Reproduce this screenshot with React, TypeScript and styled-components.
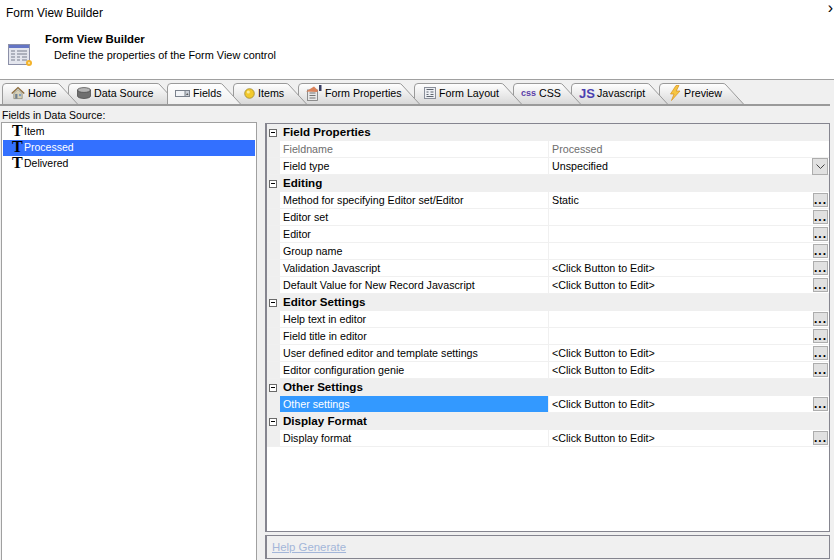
import React from 'react';
import styled, { createGlobalStyle } from 'styled-components';

const GlobalStyle = createGlobalStyle`
  html, body {
    margin: 0;
    padding: 0;
    background: #f0f0f0;
  }
  body {
    font-family: "Liberation Sans", Arial, sans-serif;
    font-size: 11px;
    color: #000;
    overflow: hidden;
  }
`;

const tabs = [
  { label: 'Home', width: 76, gap: 0, inset: 9, icon: 'home' },
  { label: 'Data Source', width: 110, gap: -10, inset: 9, icon: 'db' },
  { label: 'Fields', width: 74, gap: -11, inset: 8, icon: 'field', active: true },
  { label: 'Items', width: 74, gap: -8, inset: 11, icon: 'item' },
  { label: 'Form Properties', width: 122, gap: -9, inset: 8, icon: 'props' },
  { label: 'Form Layout', width: 108, gap: -6, inset: 10, icon: 'layout' },
  { label: 'CSS', width: 68, gap: -9, inset: 8, icon: 'css' },
  { label: 'Javascript', width: 97, gap: -10, inset: 8, icon: 'js' },
  { label: 'Preview', width: 85, gap: -9, inset: 10, icon: 'bolt' },
];

const sections = [
  {
    title: 'Field Properties',
    rows: [
      { name: 'Fieldname', value: 'Processed', muted: true },
      { name: 'Field type', value: 'Unspecified', button: 'combo' },
    ],
  },
  {
    title: 'Editing',
    rows: [
      { name: 'Method for specifying Editor set/Editor', value: 'Static', button: 'dots' },
      { name: 'Editor set', value: '', button: 'dots' },
      { name: 'Editor', value: '', button: 'dots' },
      { name: 'Group name', value: '', button: 'dots' },
      { name: 'Validation Javascript', value: '<Click Button to Edit>', button: 'dots' },
      { name: 'Default Value for New Record Javascript', value: '<Click Button to Edit>', button: 'dots' },
    ],
  },
  {
    title: 'Editor Settings',
    rows: [
      { name: 'Help text in editor', value: '', button: 'dots' },
      { name: 'Field title in editor', value: '', button: 'dots' },
      { name: 'User defined editor and template settings', value: '<Click Button to Edit>', button: 'dots' },
      { name: 'Editor configuration genie', value: '<Click Button to Edit>', button: 'dots' },
    ],
  },
  {
    title: 'Other Settings',
    rows: [{ name: 'Other settings', value: '<Click Button to Edit>', button: 'dots', selected: true }],
  },
  {
    title: 'Display Format',
    rows: [{ name: 'Display format', value: '<Click Button to Edit>', button: 'dots' }],
  },
];

function TabIcon({ kind }: { kind: string }) {
  if (kind === 'home') {
    return (
      <svg width="14" height="14" viewBox="0 0 15 14">
        <path d="M.8 7.500 7.500 1.200l6.700 6.300" fill="none" stroke="#8a6a3a" strokeWidth="1.500" />
        <path d="M3 7.500 7.500 3.300 12 7.500V13H3z" fill="#d9d2b8" stroke="#7d7d6a" strokeWidth=".7" />
        <rect x="4.500" y="8" width="2.400" height="5" fill="#6f7f8f" />
        <rect x="8.500" y="8" width="2.400" height="2.400" fill="#7d9cc0" />
      </svg>
    );
  }
  if (kind === 'db') {
    return (
      <svg width="14" height="12" viewBox="0 0 14 12">
        <path d="M.5 3v6c0 1.400 2.900 2.500 6.500 2.500s6.500-1.100 6.500-2.500V3z" fill="#6f6f6f" stroke="#444" strokeWidth=".7" />
        <ellipse cx="7" cy="3" rx="6.500" ry="2.400" fill="#b5b5b5" stroke="#444" strokeWidth=".7" />
      </svg>
    );
  }
  if (kind === 'field') {
    return (
      <svg width="15" height="7" viewBox="0 0 15 7">
        <rect x=".5" y=".5" width="14" height="6" fill="#f2f4f7" stroke="#7a818c" />
        <rect x="10" y=".5" width="4.500" height="6" fill="#c9ced6" stroke="#7a818c" />
        <path d="M11 5h2.500l-1.200-2z" fill="#555" />
      </svg>
    );
  }
  if (kind === 'item') {
    return (
      <svg width="11" height="11" viewBox="0 0 11 11">
        <circle cx="5.500" cy="5.500" r="4.800" fill="#f2c92c" stroke="#a08a30" strokeWidth=".8" />
        <circle cx="4.300" cy="4" r="1.600" fill="#fbeb9a" />
      </svg>
    );
  }
  if (kind === 'props') {
    return (
      <svg width="16" height="16" viewBox="0 0 16 16">
        <rect x="1.500" y="5" width="10" height="10.500" fill="#e8e8e8" stroke="#777" strokeWidth=".8" />
        <path d="M3.500 8h6M3.500 10.500h6M3.500 13h6" stroke="#666" strokeWidth=".9" />
        <path d="M0 6.500 8 1.500l4 4-1 1.500z" fill="#d9825a" />
        <rect x="13" y="0" width="2.500" height="6" fill="#3a3f63" />
      </svg>
    );
  }
  if (kind === 'layout') {
    return (
      <svg width="12" height="12" viewBox="0 0 12 12">
        <rect x=".5" y=".5" width="11" height="11" fill="#eef0f4" stroke="#8a8f9a" />
        <path d="M2.500 2.500h7M2.500 5h2M6.500 5h3M2.500 7.500h2M6.500 7.500h3M2.500 9.500h7" stroke="#5f6670" />
      </svg>
    );
  }
  if (kind === 'css') {
    return <CssMark>css</CssMark>;
  }
  if (kind === 'js') {
    return <JsMark>JS</JsMark>;
  }
  return (
    <svg width="12" height="16" viewBox="0 0 12 16">
      <path d="M7 .5 1.500 9H5L2.500 15.500 11 6H7.200L10 .5z" fill="#f5c542" stroke="#d98f1a" strokeWidth=".7" />
    </svg>
  );
}

function TabShape({ width, active, index }: { width: number; active?: boolean; index: number }) {
  const id = `tab-fill-${index}`;
  return (
    <TabSvg width={width} height="21" viewBox={`0 0 ${width} 21`}>
      <defs>
        <linearGradient id={id} x1="0" y1="0" x2="0" y2="1">
          <stop offset="0" stopColor="#ffffff" />
          <stop offset="1" stopColor={active ? '#f0f0f0' : '#d9d9d9'} />
        </linearGradient>
      </defs>
      <path
        d={`M.5 21V4Q.5.5 4 .5H${width - 21}Q${width - 19} .5 ${width - 18} 2L${width - 0.5} 21`}
        fill={`url(#${id})`}
        stroke="#9a9a9a"
      />
    </TabSvg>
  );
}

export default function App() {
  return (
    <Page>
      <GlobalStyle />
      <Header>
        <TitleRow>
          <span>Form View Builder</span>
          <Chevron>›</Chevron>
        </TitleRow>
        <Intro>
          <svg width="26" height="24" viewBox="0 0 26 24">
            <rect x=".5" y=".5" width="21" height="20" fill="#e4e6ee" stroke="#8c90a8" />
            <rect x="1" y="1" width="20" height="3" fill="#6475c4" />
            <path d="M3 7h4M9 7h10M3 10h4M9 10h10M3 13h4M9 13h3M14 13h5M3 16h4M9 16h3M14 16h5" stroke="#777c8c" strokeWidth="1.200" />
            <circle cx="21" cy="19" r="3" fill="#f4b32c" />
            <circle cx="21" cy="19" r="1" fill="#fdeeb0" />
          </svg>
          <IntroText>
            <strong>Form View Builder</strong>
            <span>Define the properties of the Form View control</span>
          </IntroText>
        </Intro>
      </Header>

      <TabBar>
        {tabs.map((tab, index) => (
          <Tab key={tab.label} $width={tab.width} $gap={tab.gap} $layer={tab.active ? 20 : 10 - index}>
            <TabShape width={tab.width} active={tab.active} index={index} />
            <TabContent $inset={tab.inset}>
              <TabIcon kind={tab.icon} />
              <span>{tab.label}</span>
            </TabContent>
          </Tab>
        ))}
      </TabBar>

      <Body>
        <LeftColumn>
          <ListLabel>Fields in Data Source:</ListLabel>
          <FieldList>
            {['Item', 'Processed', 'Delivered'].map((name) => (
              <FieldItem key={name} $selected={name === 'Processed'}>
                <FieldGlyph>T</FieldGlyph>
                <span>{name}</span>
              </FieldItem>
            ))}
          </FieldList>
        </LeftColumn>

        <RightColumn>
          <PropertyGrid>
            {sections.map((section) => (
              <React.Fragment key={section.title}>
                <SectionRow>
                  <Gutter>
                    <Collapse />
                  </Gutter>
                  <SectionTitle>{section.title}</SectionTitle>
                </SectionRow>
                {section.rows.map((row) => (
                  <PropRow key={row.name}>
                    <Gutter />
                    <NameCell $selected={row.selected} $muted={row.muted}>
                      {row.name}
                    </NameCell>
                    <ValueCell $muted={row.muted}>
                      <span>{row.value}</span>
                      {row.button === 'dots' && <DotsButton>...</DotsButton>}
                      {row.button === 'combo' && (
                        <ComboButton>
                          <svg width="9" height="6" viewBox="0 0 9 6">
                            <path d="M.5.500 4.500 4.500 8.500.5" fill="none" stroke="#444" />
                          </svg>
                        </ComboButton>
                      )}
                    </ValueCell>
                  </PropRow>
                ))}
              </React.Fragment>
            ))}
          </PropertyGrid>
          <HelpPanel>
            <HelpLink>Help Generate</HelpLink>
          </HelpPanel>
        </RightColumn>
      </Body>
    </Page>
  );
}

const Page = styled.div`
  width: 834px;
  height: 560px;
  display: flex;
  flex-direction: column;
  overflow: hidden;
  background: #f0f0f0;
`;

const Header = styled.header`
  height: 79px;
  background: #fff;
  border-bottom: 1px solid #a0a0a0;
  display: flex;
  flex-direction: column;
`;

const TitleRow = styled.div`
  height: 26px;
  padding: 0 0 0 6px;
  display: flex;
  align-items: center;
  justify-content: space-between;
  font-size: 11.9px;
`;

const Chevron = styled.span`
  font-size: 16px;
  line-height: 16px;
  margin: -10px 1px 0 0;
`;

const Intro = styled.div`
  display: flex;
  padding: 7px 0 0 8px;
  gap: 11px;
  svg {
    margin-top: 11px;
  }
`;

const IntroText = styled.div`
  display: flex;
  flex-direction: column;
  gap: 3px;
  line-height: 13px;
  strong {
    font-size: 11.4px;
  }
  span {
    padding-left: 9px;
    font-size: 10.9px;
  }
`;

const TabBar = styled.nav`
  height: 23px;
  margin-top: 3px;
  width: 830px;
  padding-left: 2px;
  box-sizing: border-box;
  display: flex;
  align-items: flex-end;
  border-bottom: 2px solid #9a9a9a;
`;

const Tab = styled.div<{ $width: number; $gap: number; $layer: number }>`
  position: relative;
  width: ${(p) => p.$width}px;
  height: 21px;
  margin-left: ${(p) => p.$gap}px;
  z-index: ${(p) => p.$layer};
  flex: none;
`;

const TabSvg = styled.svg`
  position: absolute;
  left: 0;
  top: 0;
`;

const TabContent = styled.div<{ $inset: number }>`
  position: relative;
  height: 20px;
  padding-left: ${(p) => p.$inset}px;
  display: flex;
  align-items: center;
  gap: 3px;
  white-space: nowrap;
  font-size: 10.7px;
`;

const CssMark = styled.span`
  font-size: 9px;
  font-weight: 700;
  color: #5a3fa8;
  width: 15px;
`;

const JsMark = styled.span`
  font-size: 13px;
  font-weight: 700;
  color: #4a3fb0;
  width: 15px;
`;

const Body = styled.div`
  flex: 1;
  display: flex;
  min-height: 0;
`;

const LeftColumn = styled.div`
  width: 257px;
  display: flex;
  flex-direction: column;
  flex: none;
`;

const ListLabel = styled.div`
  height: 16px;
  padding: 2px 0 0 2px;
  box-sizing: border-box;
  line-height: 15px;
  font-size: 10.5px;
`;

const FieldList = styled.div`
  flex: 1;
  margin-left: 1px;
  padding: 1px;
  background: #fff;
  border: solid #a0a0a0;
  border-width: 1px 1px 0 1px;
  font-size: 10.5px;
`;

const FieldItem = styled.div<{ $selected?: boolean }>`
  height: 16px;
  box-sizing: border-box;
  padding: 0 0 2px 9px;
  display: flex;
  align-items: center;
  background: ${(p) => (p.$selected ? '#3370ff' : 'transparent')};
  color: ${(p) => (p.$selected ? '#fff' : '#000')};
`;

const FieldGlyph = styled.span`
  width: 12px;
  font-family: "Liberation Serif", serif;
  font-size: 16px;
  font-weight: 700;
  line-height: 16px;
  color: #000;
`;

const RightColumn = styled.div`
  flex: 1;
  padding: 17px 4px 1px 8px;
  display: flex;
  flex-direction: column;
  gap: 3px;
  min-width: 0;
`;

const PropertyGrid = styled.div`
  flex: 1;
  background: #fff;
  border: 1px solid #85858f;
  border-left-width: 2px;
  font-size: 10.7px;
`;

const SectionRow = styled.div`
  height: 17px;
  display: flex;
  align-items: center;
  background: #efefef;
`;

const Gutter = styled.div`
  width: 13px;
  height: 100%;
  flex: none;
  display: flex;
  align-items: center;
  justify-content: flex-end;
  background: #efefef;
`;

const Collapse = styled.span`
  width: 6px;
  height: 6px;
  margin-right: 3px;
  border: 1px solid #6a6a6a;
  background: linear-gradient(#000, #000) center / 4px 1px no-repeat, #fff;
`;

const SectionTitle = styled.div`
  padding: 0 0 2px 3px;
  font-weight: 700;
  font-size: 11.6px;
`;

const PropRow = styled.div`
  height: 17px;
  display: flex;
  border-bottom: 1px solid #f0f0f0;
  box-sizing: border-box;
`;

const NameCell = styled.div<{ $selected?: boolean; $muted?: boolean }>`
  width: 269px;
  flex: none;
  padding-left: 3px;
  box-sizing: border-box;
  line-height: 16px;
  border-right: 1px solid #f0f0f0;
  background: ${(p) => (p.$selected ? '#3399ff' : '#fff')};
  color: ${(p) => (p.$selected ? '#fff' : p.$muted ? '#6d6d6d' : '#000')};
`;

const ValueCell = styled.div<{ $muted?: boolean }>`
  flex: 1;
  position: relative;
  padding-left: 3px;
  line-height: 16px;
  color: ${(p) => (p.$muted ? '#6d6d6d' : '#000')};
`;

const DotsButton = styled.div`
  position: absolute;
  right: 1px;
  top: 1px;
  width: 15px;
  height: 14px;
  box-sizing: border-box;
  border: 1px solid #adadad;
  background: #e1e1e1;
  color: #000;
  font-weight: 700;
  font-size: 12px;
  letter-spacing: 1px;
  line-height: 13px;
  text-align: center;
  overflow: hidden;
`;

const ComboButton = styled.div`
  position: absolute;
  right: 1px;
  top: 0;
  width: 16px;
  height: 17px;
  box-sizing: border-box;
  border: 1px solid #adadad;
  background: #e1e1e1;
  display: flex;
  align-items: center;
  justify-content: center;
`;

const HelpPanel = styled.div`
  height: 24px;
  flex: none;
  box-sizing: border-box;
  padding-left: 5px;
  border: 1px solid #85858f;
  border-left-width: 2px;
  display: flex;
  align-items: center;
  font-size: 11.4px;
`;

const HelpLink = styled.span`
  color: #a3b6d9;
  text-decoration: underline;
`;
